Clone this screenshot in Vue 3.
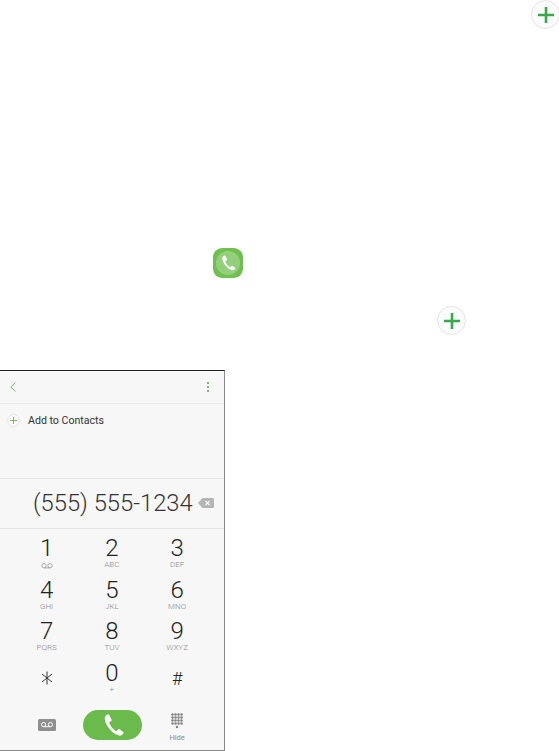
<script setup>
const keys = [
  { num: "1", sub: "", voicemail: true },
  { num: "2", sub: "ABC" },
  { num: "3", sub: "DEF" },
  { num: "4", sub: "GHI" },
  { num: "5", sub: "JKL" },
  { num: "6", sub: "MNO" },
  { num: "7", sub: "PQRS" },
  { num: "8", sub: "TUV" },
  { num: "9", sub: "WXYZ" },
  { num: "*", sub: "", star: true },
  { num: "0", sub: "+" },
  { num: "#", sub: "", hash: true },
];

const handset = "M7.2 2.2 C6 2.6 4.6 3.6 4.4 5 C4.1 8 5.8 12 8.6 15.4 C11.4 18.8 14.6 21.2 17.8 21.8 C19.4 22 20.8 20.8 21.6 19.6 C21.9 19.1 21.8 18.7 21.4 18.4 L18 15.9 C17.6 15.6 17.2 15.7 16.9 16 L15.6 17.4 C15.3 17.7 15 17.7 14.6 17.5 C13.4 16.8 12.2 15.6 11 14.2 C9.9 12.8 9 11.4 8.6 10.2 C8.5 9.8 8.6 9.5 8.9 9.3 L10.4 8.2 C10.8 7.9 10.9 7.5 10.7 7.1 L8.5 2.7 C8.2 2.2 7.7 2 7.2 2.2 Z";

const dots = [];
for (let r = 0; r < 4; r++) {
  for (let c = 0; c < 4; c++) {
    dots.push({ x: 1.5 + c * 3, y: 1.5 + r * 3 });
  }
}
dots.push({ x: 6, y: 14 });
</script>

<template>
  <main class="page">
    <div class="row row-top">
      <span class="plus-btn">
        <svg viewBox="0 0 16 16" width="16" height="16">
          <path d="M8 0V16M0 8H16" stroke="#37a84c" stroke-width="2.6" fill="none" />
        </svg>
      </span>
    </div>

    <div class="row row-app">
      <span class="app-icon">
        <span class="app-disc">
          <svg viewBox="0 0 24 24" width="18" height="18">
            <path :d="handset" fill="#fff" />
          </svg>
        </span>
      </span>
    </div>

    <div class="row row-plus">
      <span class="plus-btn">
        <svg viewBox="0 0 16 16" width="16" height="16">
          <path d="M8 0V16M0 8H16" stroke="#37a84c" stroke-width="2.6" fill="none" />
        </svg>
      </span>
    </div>

    <section class="phone">
      <header class="bar">
        <svg class="back" viewBox="0 0 6 10" width="6" height="10">
          <path d="M5.5 .5L.8 5L5.5 9.5" stroke="#6abb4b" stroke-width=".9" fill="none" />
        </svg>
        <span class="menu"><i></i><i></i><i></i></span>
      </header>

      <div class="contact-row">
        <span class="small-plus">
          <svg viewBox="0 0 7 7" width="7" height="7">
            <path d="M3.5 0V7M0 3.5H7" stroke="#6abb4b" stroke-width=".9" fill="none" />
          </svg>
        </span>
        <span class="contact-label">Add to Contacts</span>
      </div>

      <div class="number-row">
        <span class="number">(555) 555-1234</span>
        <svg class="erase" viewBox="0 0 16 10" width="16" height="10">
          <path d="M4.5 0H14.5C15.4 0 16 .6 16 1.5V8.5C16 9.4 15.4 10 14.5 10H4.5L0 5Z" fill="#b5b5b5" />
          <path d="M7.5 3L11.5 7M11.5 3L7.5 7" stroke="#f7f7f7" stroke-width="1.2" />
        </svg>
      </div>

      <div class="keypad">
        <div v-for="key in keys" :key="key.num" class="key">
          <svg v-if="key.star" class="star" viewBox="0 0 12 14" width="12" height="14">
            <path d="M6 .5V13.5M1 3L11 11M11 3L1 11" stroke="#333" stroke-width="1" fill="none" />
          </svg>
          <span v-else class="digit" :class="{ hash: key.hash }">{{ key.num }}</span>
          <svg v-if="key.voicemail" class="vm-small" viewBox="0 0 12 6" width="12" height="6">
            <circle cx="3" cy="2.7" r="2.2" stroke="#999" stroke-width=".8" fill="none" />
            <circle cx="9" cy="2.7" r="2.2" stroke="#999" stroke-width=".8" fill="none" />
            <path d="M3 4.9H9" stroke="#999" stroke-width=".8" />
          </svg>
          <span v-else-if="key.sub" class="sub">{{ key.sub }}</span>
        </div>
      </div>

      <div class="actions">
        <svg class="vm-btn" viewBox="0 0 18 12" width="18" height="12">
          <rect width="18" height="12" rx="1.5" fill="#8f8f8f" />
          <circle cx="5.6" cy="5.6" r="2.1" stroke="#fff" stroke-width="1" fill="none" />
          <circle cx="12.4" cy="5.6" r="2.1" stroke="#fff" stroke-width="1" fill="none" />
          <path d="M5.6 7.7H12.4" stroke="#fff" stroke-width="1" />
        </svg>
        <span class="call-btn">
          <svg viewBox="0 0 24 24" width="26" height="26">
            <path :d="handset" fill="#fff" />
          </svg>
        </span>
        <span class="hide">
          <svg viewBox="0 0 12 15.5" width="12" height="15.5">
            <circle v-for="(d, i) in dots" :key="i" :cx="d.x" :cy="d.y" r="1.25" fill="#808080" />
          </svg>
          <span class="hide-label">Hide</span>
        </span>
      </div>
    </section>
  </main>
</template>

<style>
html, body {
  background: #fff;
}
</style>

<style scoped>
.page {
  width: 559px;
  height: 751px;
  overflow: hidden;
  background: #fff;
  font-family: Roboto, "Liberation Sans", sans-serif;
  color: #333;
}

.row {
  display: flex;
  align-items: center;
}

.row-top {
  height: 29px;
  padding-left: 531px;
}

.row-app {
  height: 30px;
  margin-top: 219px;
  padding-left: 213px;
}

.row-plus {
  height: 29px;
  margin-top: 28px;
  padding-left: 437px;
}

.plus-btn {
  flex: none;
  width: 29px;
  height: 29px;
  box-sizing: border-box;
  border: 1px solid #e4e4e4;
  border-radius: 50%;
  background: #fbfbfb;
  display: flex;
  align-items: center;
  justify-content: center;
}

.app-icon {
  width: 30px;
  height: 30px;
  border-radius: 9px;
  background: #6fc04f;
  display: flex;
  align-items: center;
  justify-content: center;
}

.app-disc {
  width: 24px;
  height: 24px;
  border-radius: 50%;
  background: #94d07c;
  display: flex;
  align-items: center;
  justify-content: center;
}

.phone {
  width: 225px;
  height: 381px;
  margin-top: 35px;
  box-sizing: border-box;
  border-top: 1px solid #222;
  border-right: 1px solid #8a8a8a;
  border-bottom: 1px solid #8a8a8a;
  background: #f7f7f7;
}

.bar {
  height: 33px;
  box-sizing: border-box;
  border-bottom: 1px solid #ececec;
  display: flex;
  align-items: center;
  justify-content: space-between;
  padding: 0 15px 0 10px;
}

.menu {
  display: flex;
  flex-direction: column;
  gap: 1.5px;
}

.menu i {
  width: 2.5px;
  height: 2.5px;
  background: #4fa83d;
  border-radius: 50%;
}

.contact-row {
  height: 75px;
  box-sizing: border-box;
  border-bottom: 1px solid #e4e4e4;
  display: flex;
  align-items: flex-start;
  padding: 10px 0 0 7px;
  gap: 8px;
}

.small-plus {
  width: 13px;
  height: 13px;
  box-sizing: border-box;
  border: 1px solid #e6e6e6;
  border-radius: 50%;
  background: #fbfbfb;
  display: flex;
  align-items: center;
  justify-content: center;
}

.contact-label {
  font-size: 10.6px;
  line-height: 13px;
  color: #333;
}

.number-row {
  height: 50px;
  box-sizing: border-box;
  border-bottom: 1px solid #e4e4e4;
  display: flex;
  align-items: center;
  padding: 0 0 2px 33px;
  gap: 5px;
}

.number {
  font-size: 23.75px;
  font-weight: 300;
  line-height: 46px;
  color: #333;
}

.keypad {
  display: grid;
  grid-template-columns: repeat(3, 65.25px);
  grid-auto-rows: 41.5px;
  padding: 7px 0 0 14px;
}

.key {
  display: flex;
  flex-direction: column;
  align-items: center;
}

.digit {
  font-size: 24px;
  font-weight: 300;
  line-height: 24px;
  color: #222;
}

.hash {
  font-size: 18px;
  margin-top: 6px;
}

.star {
  margin-top: 10px;
}

.sub {
  font-size: 8px;
  font-weight: 300;
  line-height: 9px;
  color: #8a8a8a;
}

.vm-small {
  margin-top: 3px;
}

.actions {
  display: grid;
  grid-template-columns: repeat(3, 65.25px);
  padding: 8px 0 0 14px;
  justify-items: center;
  align-items: start;
}

.vm-btn {
  margin-top: 9px;
}

.call-btn {
  width: 59px;
  height: 30px;
  margin-left: 2px;
  border-radius: 15px;
  background: #6abb4b;
  display: flex;
  align-items: center;
  justify-content: center;
}

.hide {
  display: flex;
  flex-direction: column;
  align-items: center;
  margin-top: 3px;
}

.hide-label {
  font-size: 7.5px;
  line-height: 9px;
  margin-top: 4px;
  color: #8a8a8a;
}
</style>
